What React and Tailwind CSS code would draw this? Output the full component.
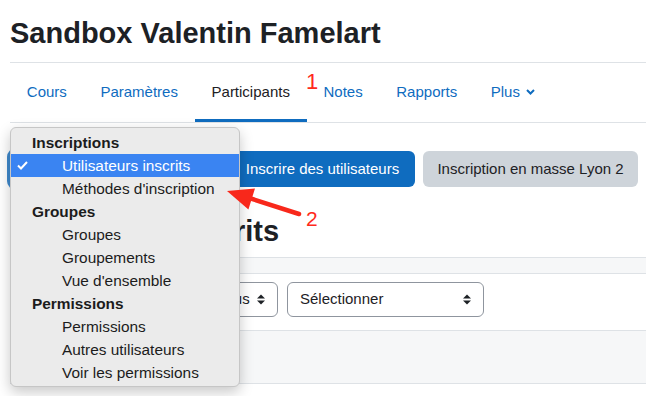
import React from "react";

const tabs = [
  { label: "Cours" },
  { label: "Paramètres" },
  { label: "Participants", active: true },
  { label: "Notes" },
  { label: "Rapports" },
  { label: "Plus", caret: true },
];

const menu = [
  { label: "Inscriptions", head: true },
  { label: "Utilisateurs inscrits", selected: true },
  { label: "Méthodes d'inscription" },
  { label: "Groupes", head: true },
  { label: "Groupes" },
  { label: "Groupements" },
  { label: "Vue d'ensemble" },
  { label: "Permissions", head: true },
  { label: "Permissions" },
  { label: "Autres utilisateurs" },
  { label: "Voir les permissions" },
];

function Caret() {
  return (
    <svg width="8" height="11" viewBox="0 0 8 11" className="shrink-0">
      <polygon points="4,0.5 8,4.5 0,4.5" fill="#1d2125" />
      <polygon points="0,6.5 8,6.5 4,10.5" fill="#1d2125" />
    </svg>
  );
}

function Select({ label, className }) {
  return (
    <div
      className={`h-[35px] flex items-center justify-between pl-3 pr-3 rounded-md border border-[#8f959e] bg-white text-[15px] text-[#1d2125] ${className}`}
    >
      <span>{label}</span>
      <Caret />
    </div>
  );
}

export default function App() {
  return (
    <div className="relative w-[646px] h-[396px] overflow-hidden bg-white font-['Liberation_Sans',Arial,sans-serif] text-[#1d2125]">
      <div className="pl-[10px]">
        {/* header */}
        <div className="pt-[16px] pb-[12px] border-b border-[#dee2e6]">
          <h1 className="text-[29px] leading-[34px] font-bold">Sandbox Valentin Famelart</h1>
        </div>

        {/* secondary nav */}
        <nav className="flex border-b border-[#dee2e6]">
          {tabs.map((t) => (
            <div
              key={t.label}
              className={`flex items-center gap-[6px] px-[16.8px] pt-[19px] pb-[17px] leading-[20px] text-[15px] border-b-[3px] ${
                t.active ? "border-[#0f6cbf] text-[#1d2125]" : "border-transparent text-[#0f6cbf]"
              }`}
            >
              {t.label}
              {t.caret && (
                <svg width="9" height="6" viewBox="0 0 9 6">
                  <path d="M1 1 L4.5 4.5 L8 1" fill="none" stroke="#0f6cbf" strokeWidth="2" />
                </svg>
              )}
            </div>
          ))}
        </nav>

        {/* tertiary nav */}
        <div className="flex gap-2 pt-[28px]">
          <div className="w-[212px] h-9 rounded-md border border-[#0f6cbf] bg-white ring-[3px] ring-[#0f6cbf]/80" />
          <div className="w-[185px] h-9 rounded-md bg-[#0f6cbf] text-white text-[15px] flex items-center justify-center">
            Inscrire des utilisateurs
          </div>
          <div className="w-[215px] h-9 rounded-md bg-[#ced4da] text-[15px] flex items-center justify-center">
            Inscription en masse Lyon 2
          </div>
        </div>

        <h2 className="mt-[27px] text-[29px] leading-[34px] font-bold">Utilisateurs inscrits</h2>

        {/* filters */}
        <div className="mt-[9px] border-t border-[#dee2e6]">
          <div className="h-[16px] bg-[#f6f7f8] border-b border-[#dee2e6]" />
          <div className="h-[57px] pt-[8px] flex items-start gap-[9px] border-b border-[#dee2e6]">
            <div className="w-[186px] h-[35px]" />
            <Select label="Tous" className="w-[73px]" />
            <Select label="Sélectionner" className="w-[197px] pr-[12px]" />
          </div>
          <div className="h-[53px] bg-[#f6f7f8] border-b border-[#dee2e6]" />
        </div>
      </div>

      {/* open select menu */}
      <div className="absolute left-[10px] top-[127px] w-[230px] h-[260px] pt-[3px] pb-[2px] rounded-[6px] border border-[#c6c6c6] bg-[#ebebeb] shadow-[0_5px_14px_rgba(0,0,0,0.22)] text-[15.4px] text-[#1c1c1c]">
        {menu.map((m, i) =>
          m.head ? (
            <div key={i} className="h-[23px] flex items-center pl-[21px] font-bold">
              {m.label}
            </div>
          ) : (
            <div
              key={i}
              className={`h-[23px] flex items-center pl-[6px] ${m.selected ? "bg-[#3a84f2] text-white" : ""}`}
            >
              <span className="w-[45px] flex items-center">
                {m.selected && (
                  <svg width="11" height="9" viewBox="0 0 11 9">
                    <path d="M1 4.5 L4 7.5 L10 1" fill="none" stroke="white" strokeWidth="2" />
                  </svg>
                )}
              </span>
              {m.label}
            </div>
          )
        )}
      </div>

      {/* annotations */}
      <span className="absolute left-[306px] top-[69px] text-[22px] leading-[26px] text-[#ff2a1c]">1</span>
      <svg className="absolute left-0 top-0" width="646" height="396" viewBox="0 0 646 396">
        <line x1="299" y1="214" x2="246" y2="197" stroke="#f8281b" strokeWidth="4.5" strokeLinecap="round" />
        <polygon points="227,191 255,188.4 248.4,209.4" fill="#f8281b" />
      </svg>
      <span className="absolute left-[306px] top-[206px] text-[21px] leading-[25px] text-[#ff2a1c]">2</span>
    </div>
  );
}
